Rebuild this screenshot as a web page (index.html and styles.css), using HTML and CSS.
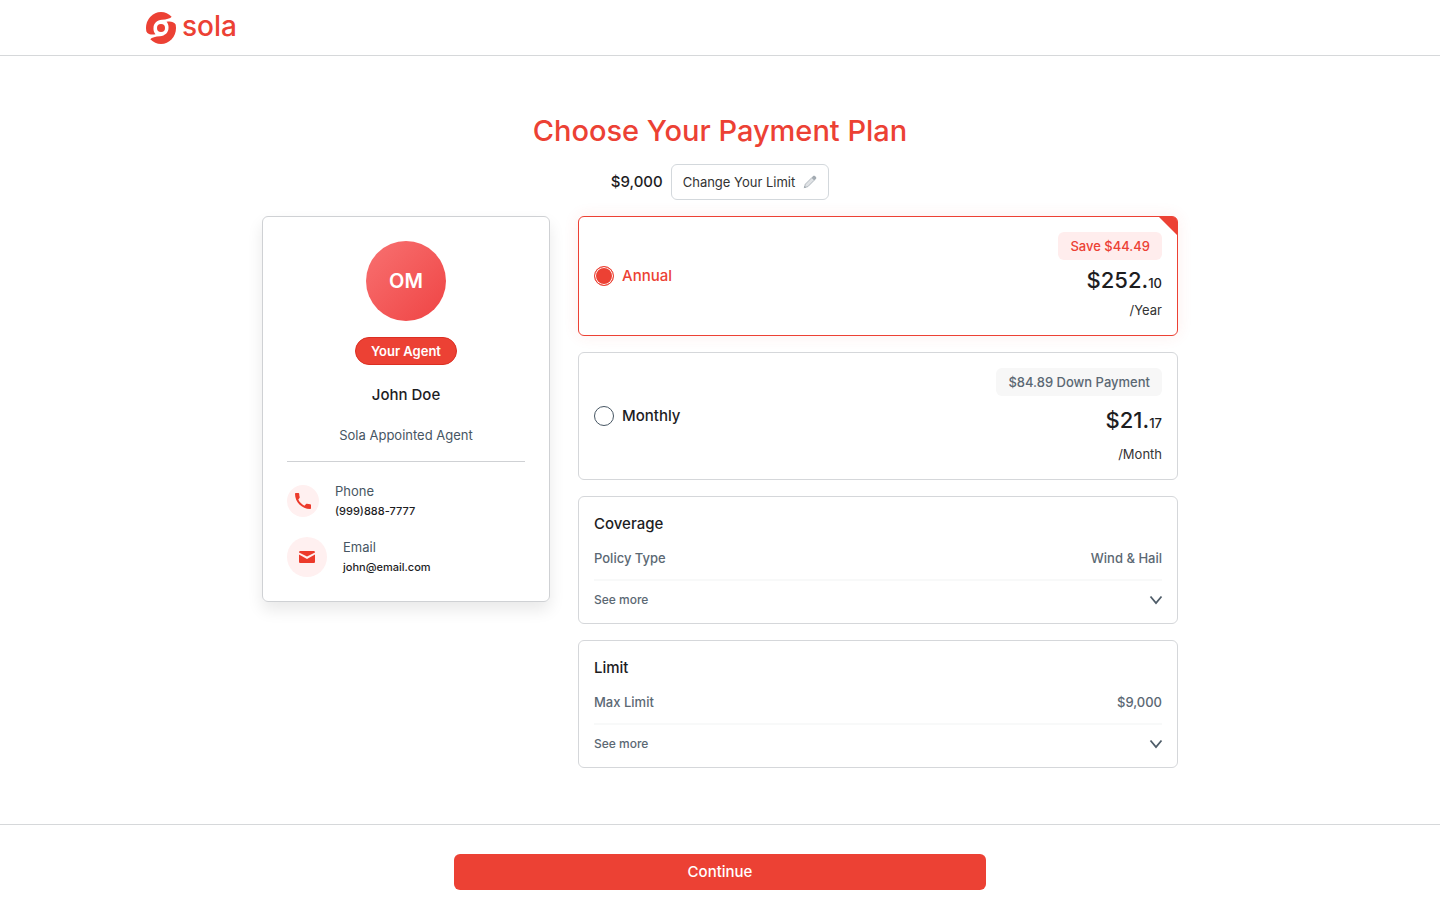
FILE: index.html
```html
<!DOCTYPE html>
<html lang="en">
<head>
<meta charset="utf-8">
<meta name="viewport" content="width=device-width, initial-scale=1">
<title>Sola – Choose Your Payment Plan</title>
<link rel="stylesheet" href="styles.css">
</head>
<body>
<header class="site-header">
  <div class="header-inner">
    <a class="logo" href="#">
      <svg class="logo-mark" viewBox="0 0 30 32" aria-hidden="true">
        <ellipse cx="15" cy="16" rx="15" ry="16" fill="#ec4134"/>
        <path fill="#fff" d="M7.500 16C7.500 11.500 11 8.200 16 7.800c4.500-.4 8-1 10-3.300L31 6v8C28.500 10 25 8.800 20.500 9.800c1.500 1.500 2.200 3.700 2 6.200 0 4.500-3.500 7.800-8.500 8.200-4.500.4-8 1-10 3.300L-1 26v-8c2.500 4 6 5.200 10.500 4.200C8 20.700 7.300 18.500 7.500 16z"/>
        <circle cx="15" cy="16" r="4" fill="#ec4134"/>
      </svg>
      <span class="logo-name">sola</span>
    </a>
  </div>
</header>

<main class="main">
  <h1 class="title">Choose Your Payment Plan</h1>
  <div class="limit-bar">
    <span class="limit-amount">$9,000</span>
    <button class="limit-button" type="button">Change Your Limit
      <svg class="pencil" viewBox="0 0 14 14" aria-hidden="true">
        <path d="M1.500 12.500l.8-3.300L8.800 2.700l2.500 2.500-6.500 6.500z" fill="#dfe2e5" stroke="#a3abb2" stroke-width=".8"/>
        <path d="M8.800 2.400l1.300-1.300c.6-.6 1.300-.6 1.900 0l.9.9c.6.600.6 1.300 0 1.900l-1.300 1.300z" fill="#a3abb2"/>
        <path d="M.7 13.300l.7-2.500 1.800 1.800z" fill="#a3abb2"/>
      </svg>
    </button>
  </div>

  <div class="columns">
    <aside class="agent">
      <div class="avatar">OM</div>
      <span class="agent-pill">Your Agent</span>
      <h2 class="agent-name">John Doe</h2>
      <p class="agent-role">Sola Appointed Agent</p>
      <div class="contacts">
        <div class="contact">
          <span class="contact-icon">
            <svg viewBox="0 0 18 18" aria-hidden="true"><path fill="#ec3a2b" d="M1 1.800C1 1.300 1.300 1 1.800 1h2.600c.5 0 .8.3.8.8 0 1.100.2 2.200.5 3.200.1.300 0 .6-.2.9L4.300 7.600c1.300 2.700 3.400 4.800 6.100 6.100l1.700-1.700c.2-.2.6-.3.9-.2 1 .3 2.100.5 3.200.5.500 0 .8.300.8.8v3.100c0 .5-.3.8-.8.8C7.800 17 1 10.200 1 1.800z"/></svg>
          </span>
          <div><div class="contact-label">Phone</div><div class="contact-value">(999)888-7777</div></div>
        </div>
        <div class="contact">
          <span class="contact-icon contact-icon-large">
            <svg viewBox="0 0 18 18" aria-hidden="true"><path fill="#ec3a2b" d="M1 4.500C1 3.500 1.500 3 2.500 3h13c1 0 1.500.5 1.500 1.500L9 8.600 1 4.500zM1 6.500l8 4.500 8-4.500v7c0 1-.5 1.500-1.500 1.500h-13C1.500 15 1 14.500 1 13.500z"/></svg>
          </span>
          <div><div class="contact-label">Email</div><div class="contact-value">john@email.com</div></div>
        </div>
      </div>
    </aside>

    <div class="plans">
      <label class="card plan plan-selected">
        <input class="radio" type="radio" name="plan" checked>
        <span class="plan-name">Annual</span>
        <span class="plan-price">
          <span class="badge badge-save">Save $44.49</span>
          <span class="price">$252.<span class="cents">10</span></span>
          <span class="period">/Year</span>
        </span>
      </label>
      <label class="card plan">
        <input class="radio" type="radio" name="plan">
        <span class="plan-name">Monthly</span>
        <span class="plan-price plan-price-loose">
          <span class="badge">$84.89 Down Payment</span>
          <span class="price">$21.<span class="cents">17</span></span>
          <span class="period">/Month</span>
        </span>
      </label>
      <section class="card">
        <h2 class="card-title">Coverage</h2>
        <div class="detail"><span>Policy Type</span><span>Wind &amp; Hail</span></div>
        <button class="see-more" type="button">See more
          <svg class="chevron" viewBox="0 0 12 10" aria-hidden="true"><path d="M.5 1.500L6 8l5.500-6.500"/></svg>
        </button>
      </section>
      <section class="card">
        <h2 class="card-title">Limit</h2>
        <div class="detail"><span>Max Limit</span><span>$9,000</span></div>
        <button class="see-more" type="button">See more
          <svg class="chevron" viewBox="0 0 12 10" aria-hidden="true"><path d="M.5 1.500L6 8l5.500-6.500"/></svg>
        </button>
      </section>
    </div>
  </div>
</main>

<footer class="footer">
  <button class="continue" type="button">Continue</button>
</footer>
</body>
</html>
```
FILE: styles.css
```css
* { box-sizing: border-box; }

body {
  margin: 0;
  min-height: 100vh;
  display: flex;
  flex-direction: column;
  background: #fff;
  color: #1d1d1f;
  font: 400 14px/20px Inter, "Liberation Sans", sans-serif;
}

h1, h2, p { margin: 0; font-weight: 500; }
button { font: inherit; color: inherit; cursor: pointer; }

.site-header { border-bottom: 1px solid #d6d8da; }
.header-inner {
  max-width: 1148px;
  margin: 0 auto;
  padding: 12px 0 11px;
}
.logo {
  display: inline-flex;
  align-items: center;
  gap: 6px;
  height: 32px;
  color: #ec4134;
  text-decoration: none;
  vertical-align: top;
}
.logo-mark { width: 30px; height: 32px; }
.logo-name { font-size: 28px; font-weight: 500; line-height: 28px; padding-bottom: 4px; }

.main {
  flex: 1;
  width: 100%;
  max-width: 916px;
  margin: 0 auto;
  padding: 56px 0;
}
.title {
  color: #ec4134;
  font-size: 29px;
  line-height: 38px;
  text-align: center;
}
.limit-bar {
  display: flex;
  justify-content: center;
  align-items: center;
  gap: 8px;
  margin: 14px 0 16px;
}
.limit-amount { font-size: 15px; font-weight: 500; }
.limit-button {
  display: flex;
  align-items: center;
  gap: 8px;
  height: 36px;
  padding: 0 11px;
  border: 1px solid #d3d8dc;
  border-radius: 6px;
  background: #fff;
  font-size: 13px;
  color: #333;
}
.pencil { width: 14px; height: 14px; }

.columns {
  display: grid;
  grid-template-columns: 288px 1fr;
  gap: 28px;
  align-items: start;
}

.agent {
  display: flex;
  flex-direction: column;
  align-items: center;
  padding: 24px;
  border: 1px solid #cfd1d4;
  border-radius: 6px;
  box-shadow: 0 8px 16px rgba(0, 0, 0, .09);
}
.avatar {
  display: grid;
  place-items: center;
  width: 80px;
  height: 80px;
  border-radius: 50%;
  background: linear-gradient(135deg, #f87171, #ef4444);
  color: #fff;
  font-size: 20px;
  font-weight: 600;
}
.agent-pill {
  margin: 16px 0 18px;
  padding: 3px 15px;
  border: 1px solid #dc2f22;
  border-radius: 14px;
  background: #ec4134;
  color: #fff;
  font-size: 13px;
  font-weight: 600;
}
.agent-name { font-size: 15px; line-height: 24px; }
.agent-role {
  margin: 18px 0 16px;
  color: #475663;
  font-size: 13px;
  font-weight: 400;
}
.contacts {
  display: flex;
  flex-direction: column;
  gap: 16px;
  width: 100%;
  padding-top: 19px;
  border-top: 1px solid #cfd1d4;
}
.contact { display: flex; align-items: center; gap: 16px; }
.contact-icon {
  display: grid;
  place-items: center;
  width: 32px;
  height: 32px;
  border-radius: 50%;
  background: #fff0f0;
}
.contact-icon svg { width: 18px; height: 18px; }
.contact-icon-large { width: 40px; height: 40px; }
.contact-label { font-size: 13px; color: #475663; }
.contact-value { font-size: 11px; font-weight: 500; }

.plans { display: flex; flex-direction: column; gap: 16px; }
.card {
  position: relative;
  padding: 15px;
  border: 1px solid #d5d7da;
  border-radius: 6px;
  background: #fff;
}
.plan { display: flex; align-items: center; gap: 8px; cursor: pointer; }
.plan-selected {
  border-color: #ec4134;
  box-shadow: 0 0 16px rgba(236, 65, 52, .09);
}
.plan-selected::after {
  content: "";
  position: absolute;
  top: 0;
  right: 0;
  width: 18px;
  height: 18px;
  border-top-right-radius: 4px;
  background: #ec4134;
  clip-path: polygon(0 0, 100% 0, 100% 100%);
}
.radio {
  appearance: none;
  width: 20px;
  height: 20px;
  margin: 0;
  border: 1px solid #475663;
  border-radius: 50%;
}
.radio:checked {
  border-color: #ec4134;
  background: #ec4134;
  box-shadow: inset 0 0 0 1px #fff;
}
.plan-name { font-size: 15px; font-weight: 500; }
.plan-selected .plan-name { color: #ec4134; }
.plan-price {
  display: flex;
  flex-direction: column;
  align-items: flex-end;
  margin-left: auto;
}
.plan-price-loose { gap: 4px; }
.badge {
  padding: 4px 12px;
  border-radius: 6px;
  background: #f7f7f7;
  color: #5b6873;
  font-size: 13px;
  font-weight: 500;
}
.badge-save { background: #ffeded; color: #ec4134; }
.price { font-size: 22px; font-weight: 500; line-height: 40px; }
.cents { font-size: 13px; line-height: 20px; }
.period { font-size: 13px; color: #333; }

.card-title { font-size: 15px; line-height: 24px; }
.detail {
  display: flex;
  justify-content: space-between;
  margin-top: 12px;
  padding-bottom: 11px;
  border-bottom: 2px solid #f8f9f9;
  color: #5b6873;
  font-size: 13px;
  font-weight: 500;
}
.see-more {
  display: flex;
  justify-content: space-between;
  align-items: center;
  width: 100%;
  margin-top: 11px;
  padding: 0;
  border: 0;
  background: none;
  color: #5b6873;
  font-size: 12px;
  font-weight: 500;
  line-height: 16px;
}
.chevron {
  width: 12px;
  height: 10px;
  overflow: visible;
  fill: none;
  stroke: #4f5d69;
  stroke-width: 1.8;
}

.footer {
  display: flex;
  justify-content: center;
  padding: 29px 16px 30px;
  border-top: 1px solid #d6d8da;
}
.continue {
  width: 100%;
  max-width: 532px;
  height: 36px;
  border: 0;
  border-radius: 6px;
  background: #ec4134;
  color: #fff;
  font-size: 15px;
  font-weight: 500;
}
```
